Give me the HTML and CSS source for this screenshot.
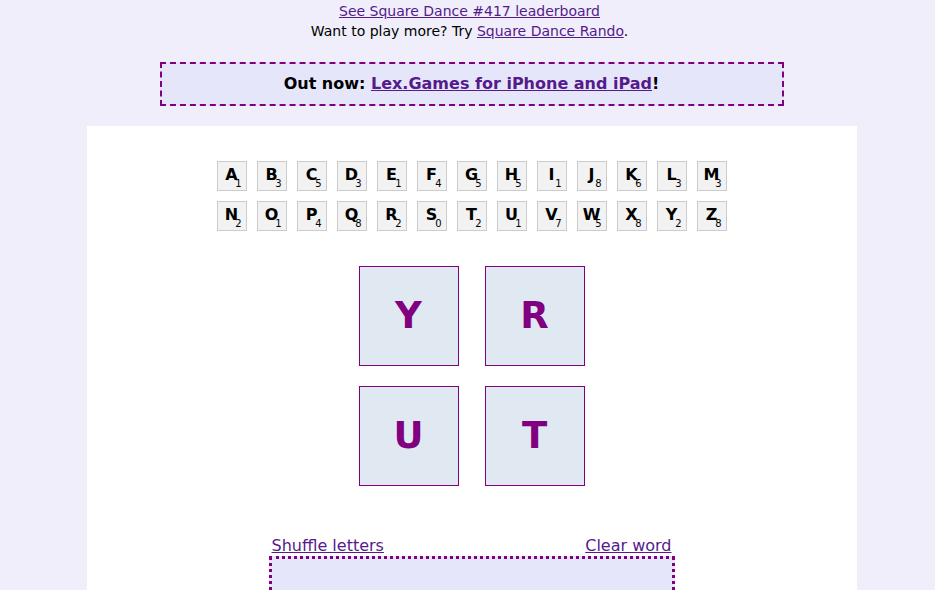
FILE: index.html
```html
<!DOCTYPE html>
<html>
<head>
<meta charset="utf-8">
<link rel="stylesheet" href="styles.css">
</head>
<body>
<div class="top">
  <div class="line"><a href="#">See Square Dance #417 leaderboard</a></div>
  <div class="line">Want to play more? Try <a href="#">Square Dance Rando</a>.</div>
</div>
<div class="banner">Out now: <a href="#">Lex.Games for iPhone and iPad</a>!</div>
<div class="card">
  <div class="alpha">
    <div class="row">
      <div class="tile">A<span class="pts">1</span></div>
      <div class="tile">B<span class="pts">3</span></div>
      <div class="tile">C<span class="pts">5</span></div>
      <div class="tile">D<span class="pts">3</span></div>
      <div class="tile">E<span class="pts">1</span></div>
      <div class="tile">F<span class="pts">4</span></div>
      <div class="tile">G<span class="pts">5</span></div>
      <div class="tile">H<span class="pts">5</span></div>
      <div class="tile">I<span class="pts">1</span></div>
      <div class="tile">J<span class="pts">8</span></div>
      <div class="tile">K<span class="pts">6</span></div>
      <div class="tile">L<span class="pts">3</span></div>
      <div class="tile">M<span class="pts">3</span></div>
    </div>
    <div class="row">
      <div class="tile">N<span class="pts">2</span></div>
      <div class="tile">O<span class="pts">1</span></div>
      <div class="tile">P<span class="pts">4</span></div>
      <div class="tile">Q<span class="pts">8</span></div>
      <div class="tile">R<span class="pts">2</span></div>
      <div class="tile">S<span class="pts">0</span></div>
      <div class="tile">T<span class="pts">2</span></div>
      <div class="tile">U<span class="pts">1</span></div>
      <div class="tile">V<span class="pts">7</span></div>
      <div class="tile">W<span class="pts">5</span></div>
      <div class="tile">X<span class="pts">8</span></div>
      <div class="tile">Y<span class="pts">2</span></div>
      <div class="tile">Z<span class="pts">8</span></div>
    </div>
  </div>
  <div class="board">
    <div class="big">Y</div>
    <div class="big">R</div>
    <div class="big">U</div>
    <div class="big">T</div>
  </div>
  <div class="controls">
    <div class="links"><a href="#">Shuffle letters</a><a href="#">Clear word</a></div>
    <div class="word"></div>
  </div>
</div>
</body>
</html>
```
FILE: styles.css
```css
html, body {
  margin: 0;
  padding: 0;
}
body {
  background: #efeefa;
  font-family: "DejaVu Sans", sans-serif;
  color: #000;
  height: 590px;
  overflow: hidden;
  padding-left: 8px;
}
a {
  color: #551a8b;
}
.top {
  text-align: center;
  font-size: 14px;
  line-height: 20px;
  padding-top: 1px;
  margin-right: 4px;
}
.banner {
  margin: 21px auto 0;
  width: 620px;
  height: 40px;
  border: 2px dashed #800080;
  background: #e6e6fa;
  font-size: 16px;
  font-weight: bold;
  line-height: 40px;
  text-align: center;
}
.card {
  margin: 20px auto 0;
  width: 770px;
  background: #fff;
  padding-top: 35px;
  height: 600px;
  box-sizing: border-box;
}
.alpha {
  display: flex;
  flex-direction: column;
  align-items: center;
  gap: 10px;
}
.row {
  display: flex;
  gap: 10px;
}
.tile {
  position: relative;
  width: 28px;
  height: 28px;
  border: 1px solid #ccc;
  background: #f2f2f2;
  font-weight: bold;
  font-size: 16px;
  line-height: 26px;
  text-align: center;
}
.pts {
  position: absolute;
  right: 4px;
  bottom: 1px;
  font-size: 10px;
  font-weight: normal;
  line-height: 10px;
}
.board {
  margin: 35px auto 0;
  width: 226px;
  display: grid;
  grid-template-columns: 100px 100px;
  column-gap: 26px;
  row-gap: 20px;
}
.big {
  width: 98px;
  height: 98px;
  border: 1px solid #800080;
  background: #e0e8f1;
  color: #800080;
  font-weight: bold;
  font-size: 37px;
  line-height: 98px;
  text-align: center;
}
.controls {
  margin: 49px auto 0;
  width: 406px;
}
.links {
  display: flex;
  justify-content: space-between;
  padding: 0 3px;
  font-size: 16px;
  line-height: 21px;
}
.word {
  height: 60px;
  border: 3px dotted #800080;
  background: #e6e6fa;
}
```
